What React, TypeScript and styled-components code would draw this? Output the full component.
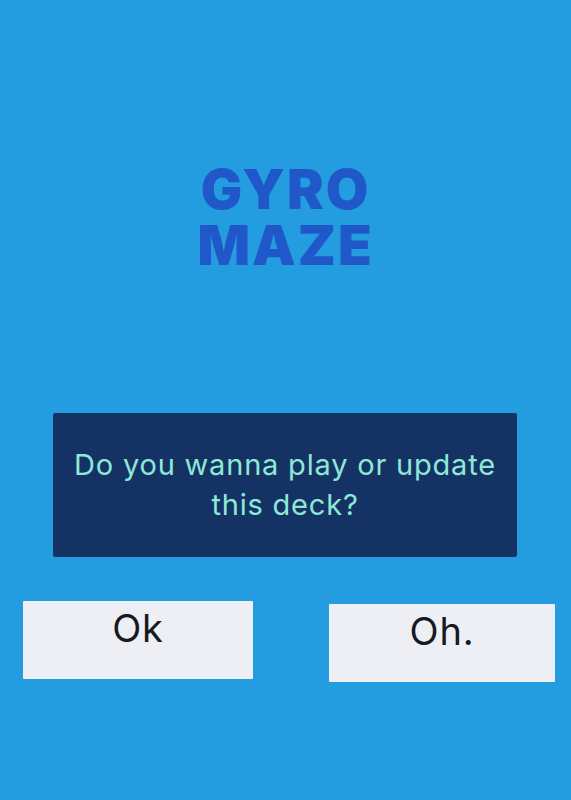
import React from "react";
import styled, { createGlobalStyle } from "styled-components";

const GlobalStyle = createGlobalStyle`
  html, body {
    margin: 0;
    padding: 0;
    background: #239de0;
  }
  body {
    font-family: Inter, "Liberation Sans", sans-serif;
  }
`

const Screen = styled.div`
  width: 571px;
  height: 800px;
  background: #239de0;
  display: flex;
  flex-direction: column;
  box-sizing: border-box;
  padding-top: 161px;
`

const Title = styled.h1`
  margin: 0;
  text-align: center;
  font-family: Inter, "DejaVu Sans", sans-serif;
  font-weight: 900;
  font-size: 55px;
  line-height: 56px;
  color: #2058c9;
  letter-spacing: 2px;
`

const Dialog = styled.div`
  margin: 140px 54px 0 53px;
  height: 144px;
  background: #153265;
  border-radius: 2px;
  display: flex;
  align-items: center;
  justify-content: center;
  padding: 0 12px;
`

const Question = styled.p`
  margin: 0;
  text-align: center;
  color: #8de8d5;
  font-size: 29px;
  line-height: 40px;
  letter-spacing: 0.8px;
`

const ButtonRow = styled.div`
  display: flex;
  justify-content: space-between;
  align-items: flex-start;
  margin: 44px 16px 0 23px;
`

const ChoiceButton = styled.button<{ $width: number; $offset?: number }>`
  width: ${p => p.$width}px;
  height: 78px;
  margin-top: ${p => p.$offset || 0}px;
  border: none;
  border-radius: 1px;
  background: #edeff5;
  color: #161a1e;
  font-family: Inter, "Liberation Sans", sans-serif;
  font-size: 38px;
  line-height: 50px;
  letter-spacing: 0.8px;
  padding: 2px 0 0;
  display: flex;
  justify-content: center;
  align-items: flex-start;
  cursor: pointer;
`

export default function App() {
    return (
        <>
            <GlobalStyle/>
            <Screen>
                <Title>GYRO<br/>MAZE</Title>
                <Dialog>
                    <Question>Do you wanna play or update this deck?</Question>
                </Dialog>
                <ButtonRow>
                    <ChoiceButton $width={230}>Ok</ChoiceButton>
                    <ChoiceButton $width={226} $offset={3}>Oh.</ChoiceButton>
                </ButtonRow>
            </Screen>
        </>
    )
}
